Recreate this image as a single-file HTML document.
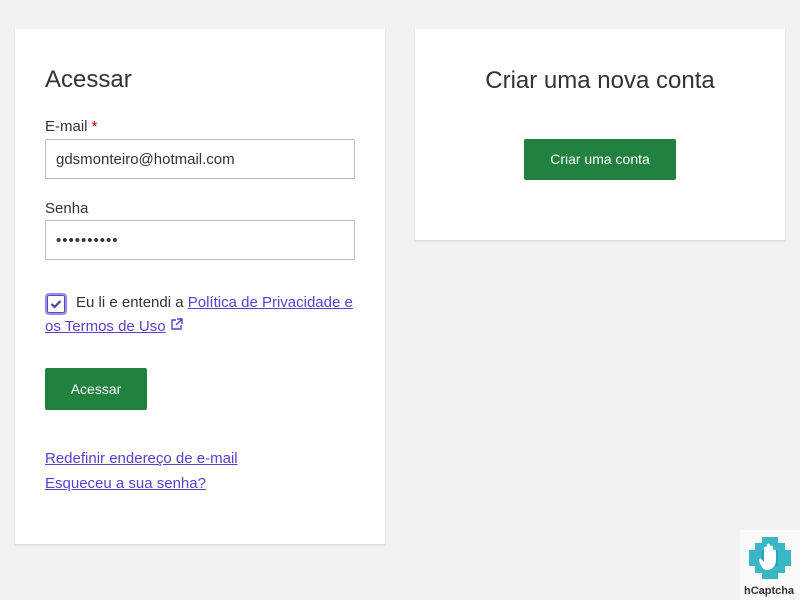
<!DOCTYPE html>
<html><head><style>
body{margin:0;width:800px;height:600px;background:#f2f2f2;font-family:"Liberation Sans",sans-serif;color:#333;position:relative;overflow:hidden}
.card{position:absolute;background:#fff;box-shadow:0 1px 2px rgba(0,0,0,.15)}
h1{font-weight:normal;font-size:24px;margin:0;position:absolute}
.lbl{position:absolute;left:30px;font-size:15px}
.inp{position:absolute;left:30px;height:40px;border:1px solid #bbb;border-radius:2px;font-size:15px;line-height:40px;padding-left:10px;box-sizing:border-box;width:310px}
a{color:#5a3fd0}
.btn{position:absolute;background:#23813f;color:#fff;font-size:14px;text-align:center;border-radius:2px}
</style></head><body>
<div class="card" style="left:15px;top:29px;width:370px;height:515px">
<h1 style="left:30px;top:37px">Acessar</h1>
<div class="lbl" style="top:89px">E-mail <span style="color:#c00">*</span></div>
<div class="inp" style="top:110px">gdsmonteiro@hotmail.com</div>
<div class="lbl" style="top:171px">Senha</div>
<div class="inp" style="top:191px;letter-spacing:1px">••••••••••</div>
<div style="position:absolute;left:30px;top:264px;width:22px;height:22px;border:2px solid #9a8ce6;border-radius:4px;box-sizing:border-box;box-shadow:inset 0 0 0 1px #5a48c8"><svg width="18" height="18" viewBox="0 0 18 18" style="position:absolute;left:0;top:0"><path d="M4.5 9l3 3 6-6" stroke="#4a3fa8" stroke-width="2.2" fill="none"/></svg></div>
<div style="position:absolute;left:30px;top:262px;width:320px;font-size:15px;line-height:24px;text-indent:31px">Eu li e entendi a <a href="#">Política de Privacidade e os Termos de Uso</a> <svg width="13" height="13" viewBox="0 0 13 13"><path d="M6 2H2v9h9V7M7 1h5v5M12 1L6 7" stroke="#5a3fd0" stroke-width="1.4" fill="none"/></svg></div>
<div class="btn" style="left:30px;top:339px;width:102px;height:42px;line-height:42px">Acessar</div>
<div style="position:absolute;left:30px;top:417px;font-size:15px;line-height:25px"><a href="#">Redefinir endereço de e-mail</a><br><a href="#">Esqueceu a sua senha?</a></div>
</div>
<div class="card" style="left:415px;top:29px;width:370px;height:211px">
<h1 style="left:0;width:370px;text-align:center;top:38px">Criar uma nova conta</h1>
<div class="btn" style="left:109px;top:110px;width:152px;height:41px;line-height:41px">Criar uma conta</div>
</div>
<div style="position:absolute;left:740px;top:530px;width:60px;height:70px;background:#fafafa">
<svg width="46" height="46" viewBox="0 0 46 46" style="position:absolute;left:7px;top:5px"><path d="M15 2h16v6h7v7h6v16h-6v7h-7v6H15v-6H8v-7H2V15h6V8h7z" fill="#3bb6c4"/><path d="M15 15h16v16H15z" fill="#1e8fc4" opacity=".5"/><path d="M14 30c-3-4-2-8 0-6l3 3V13c0-2 3-2 3 0v6V10c0-2 3-2 3 0v9-7c0-2 3-2 3 0v8-4c0-2 3-2 3 0v9c0 6-4 10-9 10-3 0-5-2-6-5z" fill="#fff"/></svg>
<div style="position:absolute;left:4px;top:55px;font-size:11px;font-weight:bold;color:#333">hCaptcha</div>
</div>
</body></html>
